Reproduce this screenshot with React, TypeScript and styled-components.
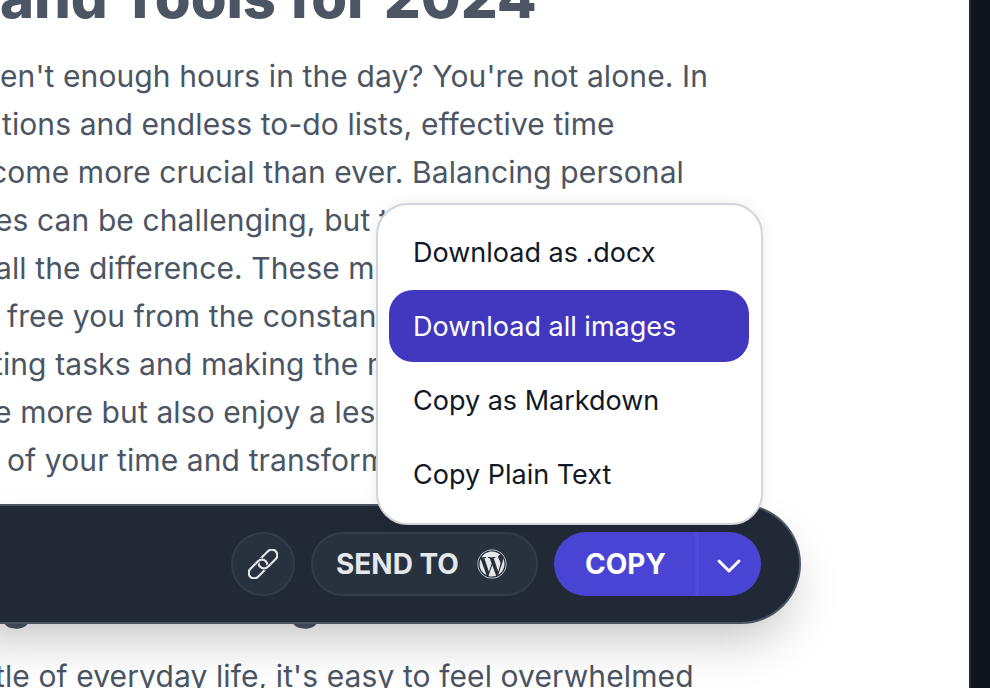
import React from 'react';
import styled, { createGlobalStyle } from 'styled-components';
import { FaWordpress } from 'react-icons/fa';
import { ChevronDown } from 'lucide-react';

const GlobalStyle = createGlobalStyle`
  html, body {
    margin: 0;
    padding: 0;
    height: 100%;
    background: #fff;
    overflow: hidden;
    font-family: Inter, "Liberation Sans", sans-serif;
  }
  #root { height: 100%; }
`;

const Page = styled.div`
  position: relative;
  display: flex;
  height: 688px;
  overflow: hidden;
`;

const Article = styled.main`
  flex: 1;
  min-width: 0;
  overflow: hidden;
  color: #4b5563;
`;

const Title = styled.h1`
  margin: -39px 0 0;
  font-size: 58px;
  line-height: 72px;
  font-weight: 800;
  letter-spacing: -0.1px;
  white-space: nowrap;
`;

const Paragraph = styled.div`
  margin-top: 19px;
`;

const Line = styled.div<{ $shift?: number }>`
  margin-left: ${p => p.$shift ?? 0}px;
  font-size: 30px;
  line-height: 48px;
  letter-spacing: 0.1px;
  white-space: nowrap;
`;

const SubHeading = styled.h2`
  margin: 89px 0 23px -125px;
  font-size: 48px;
  line-height: 56px;
  font-weight: 800;
  letter-spacing: -1.3px;
  white-space: nowrap;
`;

const Sidebar = styled.aside`
  width: 19px;
  flex: none;
  background: #10141d;
  border-left: 2px solid #1f2937;
`;

const Toolbar = styled.div`
  position: absolute;
  left: -40px;
  top: 504px;
  width: 841px;
  height: 120px;
  box-sizing: border-box;
  padding: 0 38px 0 0;
  display: flex;
  align-items: center;
  justify-content: flex-end;
  gap: 16px;
  background: #212836;
  border: 2px solid #4b5563;
  border-left: none;
  border-radius: 0 60px 60px 0;
  box-shadow: 0 25px 50px -12px rgba(0, 0, 0, 0.25);
`;

const IconButton = styled.button`
  width: 64px;
  height: 64px;
  padding: 0;
  display: flex;
  align-items: center;
  justify-content: center;
  color: #e5e7eb;
  background: #28313e;
  border: 2px solid #333c4a;
  border-radius: 50%;
`;

const SendButton = styled.button`
  width: 227px;
  height: 64px;
  padding: 0 6px 0 0;
  display: flex;
  align-items: center;
  justify-content: center;
  gap: 18px;
  font: 700 28px Inter, "Liberation Sans", sans-serif;
  color: #e5e7eb;
  background: #28313e;
  border: 2px solid #333c4a;
  border-radius: 32px;
`;

const CopyGroup = styled.div`
  display: flex;
  height: 64px;
  width: 207px;
  border-radius: 32px;
  overflow: hidden;
  background: #4a44d4;
`;

const CopyButton = styled.button`
  flex: 1;
  padding: 0 0 0 2px;
  border: none;
  border-right: 4px solid #4f49dc;
  background: transparent;
  color: #fff;
  font: 700 28px Inter, "Liberation Sans", sans-serif;
`;

const CaretButton = styled.button`
  width: 62px;
  padding: 4px 2px 0 0;
  display: flex;
  align-items: center;
  justify-content: center;
  border: none;
  background: transparent;
  color: #fff;
`;

const Menu = styled.div`
  position: absolute;
  left: 376px;
  top: 203px;
  width: 387px;
  height: 322px;
  box-sizing: border-box;
  padding: 11px 12px 11px 11px;
  display: flex;
  flex-direction: column;
  gap: 2px;
  background: #fff;
  border: 2px solid #d1d5db;
  border-radius: 32px;
  box-shadow: 0 0 14px rgba(0, 0, 0, 0.08);
`;

const MenuItem = styled.div<{ $active?: boolean }>`
  height: 72px;
  flex: none;
  padding: 0 24px;
  display: flex;
  align-items: center;
  font-size: 27px;
  border-radius: 24px;
  color: ${p => (p.$active ? '#fff' : '#111827')};
  background: ${p => (p.$active ? '#4238c0' : 'transparent')};
`;

const ChainIcon = () => (
  <svg width="30" height="30" viewBox="0 0 30 30" fill="none" stroke="#e5e7eb" strokeWidth="2.2">
    <g transform="rotate(-45 15 15)">
      <rect x="-3" y="9.5" width="22" height="11" rx="5.5" />
      <rect x="11" y="9.5" width="22" height="11" rx="5.5" />
      <path d="M10 9.5H13.5A5.5 5.5 0 0 1 17.4 11.1" stroke="#28313e" strokeWidth="4" />
      <path d="M10 9.5H13.5A5.5 5.5 0 0 1 17.4 11.1" />
      <path d="M20 20.5H16.5A5.5 5.5 0 0 1 12.6 18.9" stroke="#28313e" strokeWidth="4" />
      <path d="M20 20.5H16.5A5.5 5.5 0 0 1 12.6 18.9" />
    </g>
  </svg>
);

const lines: [string, number][] = [
  ["en't enough hours in the day? You're not alone. In", 0],
  ['tions and endless to-do lists, effective time', 2],
  ['come more crucial than ever. Balancing personal', -10],
  ['es can be challenging, but the right tools can', -5],
  ['all the difference. These methods will help', -5],
  ['free you from the constant worry of time', 7],
  ['ting tasks and making the most of it', -7],
  ['e more but also enjoy a less stressful life', -6],
  ['of your time and transform how you work', 7],
];

export default function App() {
  return (
    <>
      <GlobalStyle />
      <Page>
        <Article>
          <Title>and Tools for 2024</Title>
          <Paragraph>
            {lines.map(([text, shift]) => (
              <Line key={text} $shift={shift}>{text}</Line>
            ))}
          </Paragraph>
          <SubHeading>Saving Time Is a Big Win</SubHeading>
          <Line $shift={-5}>tle of everyday life, it's easy to feel overwhelmed</Line>
        </Article>
        <Sidebar />
        <Toolbar>
          <IconButton><ChainIcon /></IconButton>
          <SendButton>SEND TO <FaWordpress size={30} /></SendButton>
          <CopyGroup>
            <CopyButton>COPY</CopyButton>
            <CaretButton><ChevronDown size={40} strokeWidth={1.8} /></CaretButton>
          </CopyGroup>
        </Toolbar>
        <Menu>
          <MenuItem>Download as .docx</MenuItem>
          <MenuItem $active>Download all images</MenuItem>
          <MenuItem>Copy as Markdown</MenuItem>
          <MenuItem>Copy Plain Text</MenuItem>
        </Menu>
      </Page>
    </>
  );
}
